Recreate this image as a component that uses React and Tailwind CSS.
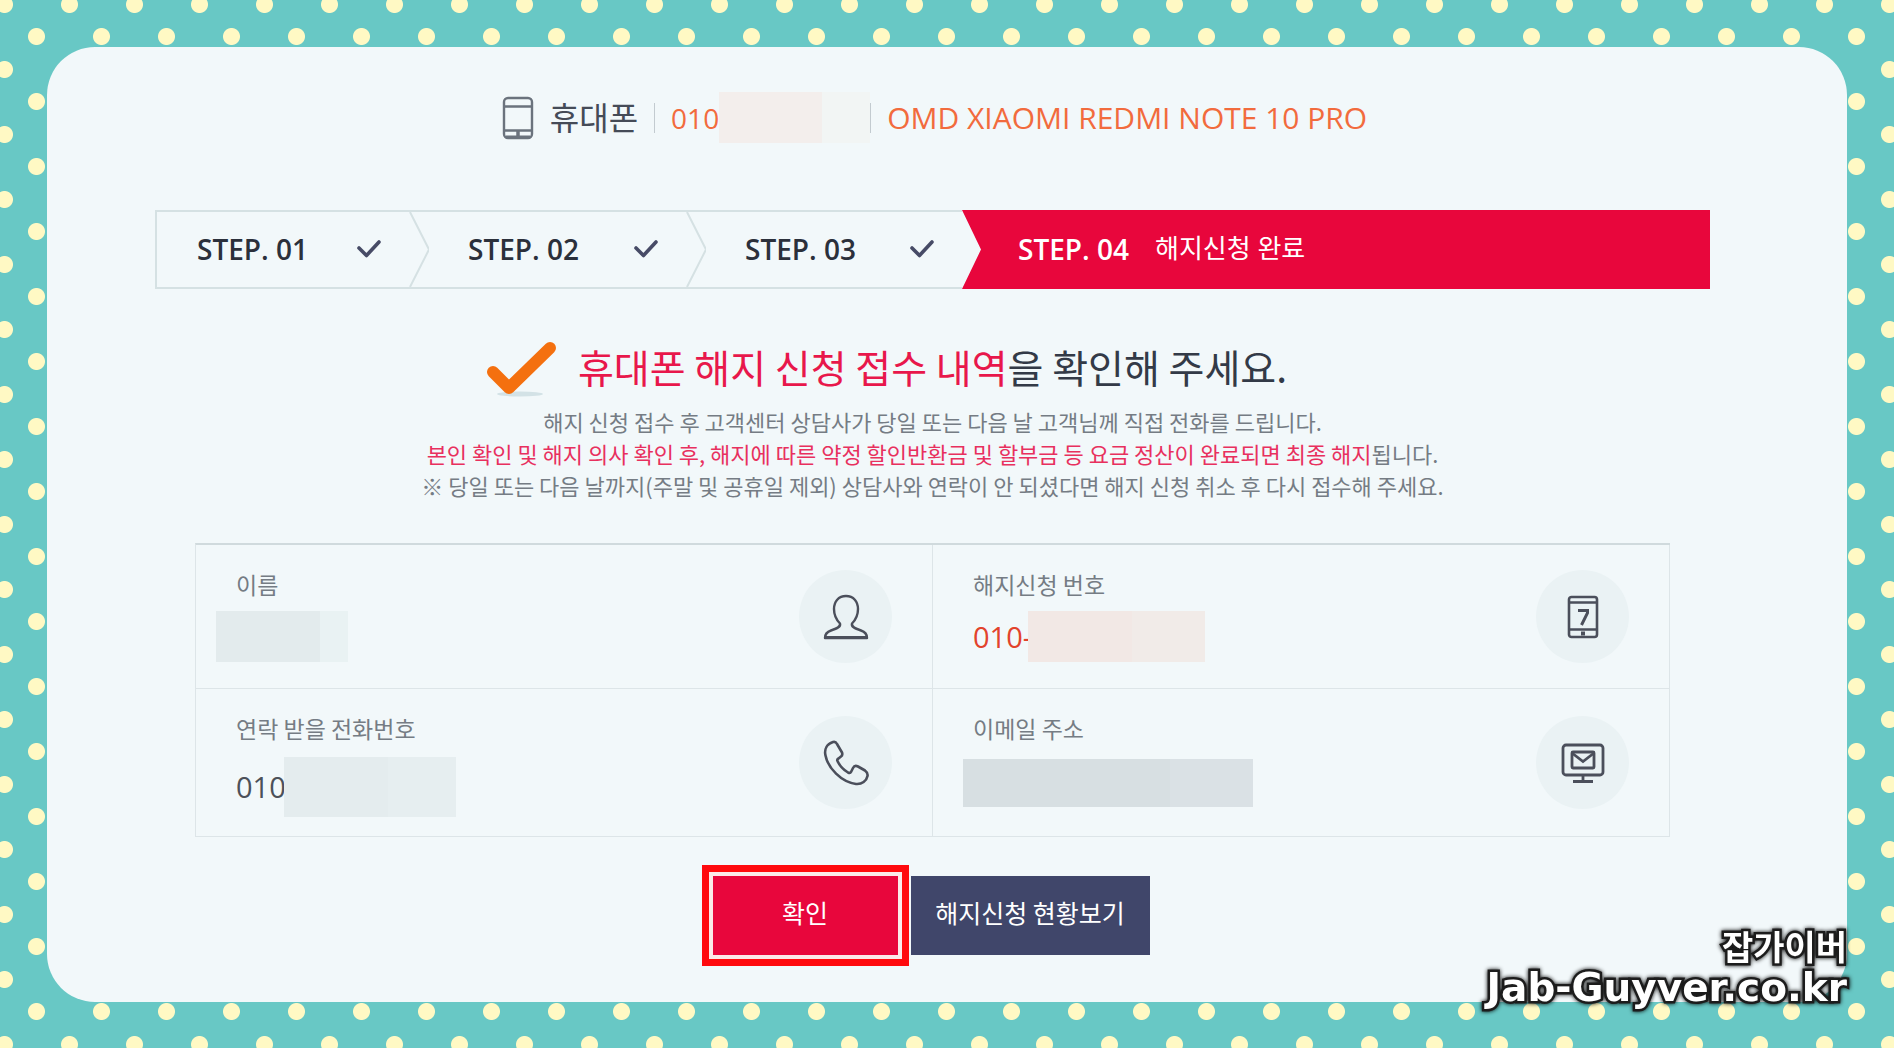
import React from 'react';
import clsx from 'clsx';

const steps = [
  { label: 'STEP. 01', done: true },
  { label: 'STEP. 02', done: true },
  { label: 'STEP. 03', done: true },
];

const PhoneIcon = () => (
  <svg viewBox="0 0 32 44" className="w-8 h-11 shrink-0" fill="none" stroke="#6b737d" strokeWidth="2.4">
    <rect x="2" y="2" width="28" height="40" rx="4" />
    <path d="M2 10.500H30M2 34.500H30" />
    <path d="M16 34.500V42" strokeWidth="3.500" />
    <path d="M4 40.500H28" strokeWidth="2" />
  </svg>
);

const StepCheck = () => (
  <svg viewBox="0 0 26 20" className="w-[26px] h-5" fill="none" stroke="#474b66" strokeWidth="3.6">
    <path d="M3 9L10.500 16.500L23 3" strokeLinecap="round" strokeLinejoin="round" />
  </svg>
);

const Chevron = () => (
  <svg
    viewBox="0 0 20 78"
    preserveAspectRatio="none"
    className="absolute left-full top-0 w-5 h-full"
    fill="none"
    stroke="#d5e1e3"
    strokeWidth="2"
  >
    <path d="M1 0L20 39L1 78" />
  </svg>
);

const BigCheck = () => (
  <svg viewBox="0 0 72 58" className="w-[72px] h-[58px]" fill="none">
    <ellipse cx="34" cy="55" rx="23" ry="2.500" fill="#d3e2e6" />
    <path d="M7 33L23 49L64 9" stroke="#f4700f" strokeWidth="12" strokeLinecap="round" strokeLinejoin="round" />
  </svg>
);

const UserIcon = () => (
  <svg viewBox="0 0 48 48" className="w-12 h-12" fill="none" stroke="#4b4f5b" strokeWidth="2.400" strokeLinejoin="round">
    <path d="M24 3C16.500 3 12 8.500 12 16C12 21.500 13.500 26 18 30.500C19 34 15 35.500 9 37.500C4.500 39 3 41 3 45H45C45 41 43.500 39 39 37.500C33 35.500 29 34 30 30.500C34.500 26 36 21.500 36 16C36 8.500 31.500 3 24 3Z" />
    <path d="M3 44.500H45" strokeWidth="3" />
  </svg>
);

const CallIcon = () => (
  <svg viewBox="0 0 48 48" className="w-12 h-12" fill="none" stroke="#4b4f5b" strokeWidth="2.600" strokeLinejoin="round">
    <path d="M11 3C5 5 2 10 3.500 16.500C6 29 19 43 34 45C40 45.500 44.500 42 45.500 37C46 34.500 45 33 43 31.500L36 27.500C34 26.500 32 27 31 29L29 33C28.500 34 27 34 26 33.500C21 30.500 17.500 26.500 15.500 22C15 21 15.500 20 16.500 19.500L19 17.500C20.500 16.500 20.500 15 20 13.500L15 5C14 3 12.500 2.500 11 3Z" />
  </svg>
);

const NumberIcon = () => (
  <svg viewBox="0 0 32 44" className="w-8 h-11" fill="none" stroke="#4b4f5b" strokeWidth="2.600">
    <rect x="2" y="2" width="28" height="40" rx="2.500" />
    <path d="M2 7.500H30M2 34.500H30" />
    <path d="M14 38.500H18" strokeWidth="4" />
    <path d="M11 15.500H20.500V18L14.500 30" strokeWidth="3" />
  </svg>
);

const MailIcon = () => (
  <svg viewBox="0 0 44 40" className="w-11 h-10" fill="none" stroke="#4b4f5b" strokeWidth="2.800">
    <rect x="2" y="2" width="40" height="30" rx="3" />
    <rect x="11" y="9" width="22" height="16" rx="1" />
    <path d="M11 10L22 18.500L33 10M22 32V38M12 38.500H32" />
  </svg>
);

const fields = [
  {
    label: '이름',
    row: 'h-[144px]',
    gap: 'mt-3',
    mask: 'ml-[-20px] h-[51px]',
    parts: ['w-[104px] bg-[#e3ebed]', 'w-7 bg-[#e9f2f3]'],
    Icon: UserIcon,
  },
  {
    label: '해지신청 번호',
    prefix: '010-',
    tone: 'text-[#e2432c] font-medium leading-[52px]',
    row: 'h-[144px]',
    gap: 'mt-3',
    mask: 'relative ml-[-4px] h-[51px]',
    parts: ['w-[104px] bg-[#f2e8e5]', 'w-[73px] bg-[#f1ebe8]'],
    Icon: NumberIcon,
  },
  {
    label: '연락 받을 전화번호',
    prefix: '010',
    tone: 'text-[#4c5159] leading-[60px]',
    row: 'h-[148px]',
    gap: 'mt-[14px]',
    mask: 'ml-[-2px] h-[60px]',
    parts: ['w-[104px] bg-[#e4ecee]', 'w-[68px] bg-[#e6eef0]'],
    Icon: CallIcon,
  },
  {
    label: '이메일 주소',
    row: 'h-[148px]',
    gap: 'mt-4',
    mask: 'ml-[-10px] h-12',
    parts: ['w-[207px] bg-[#d7dfe2]', 'w-[83px] bg-[#dae1e5]'],
    Icon: MailIcon,
  },
];

const Field = ({ label, prefix, tone, row, gap, mask, parts, Icon }) => (
  <div className={clsx('flex items-center justify-between pl-10 pr-10 border-r border-b border-[#dde5e8]', row)}>
    <dl className="self-start pt-6">
      <dt className="text-[23px] leading-[30px] text-[#757c84]">{label}</dt>
      <dd className={clsx('flex items-start', gap)}>
        {prefix && (
          <span className={clsx('text-[29px] font-["Open_Sans","Noto_Sans_CJK_KR",sans-serif]', tone)}>
            {prefix}
          </span>
        )}
        <span className={clsx('flex', mask)}>
          {parts.map((part) => (
            <span key={part} className={part} />
          ))}
        </span>
      </dd>
    </dl>
    <div className="flex items-center justify-center w-[93px] h-[93px] shrink-0 rounded-full bg-[#eaf2f4]">
      <Icon />
    </div>
  </div>
);

const DeviceHeader = () => (
  <header className="flex items-center justify-center h-[51px] pl-1 font-['Open_Sans','Noto_Sans_CJK_KR',sans-serif]">
    <PhoneIcon />
    <span className="ml-4 text-[32px] text-[#454b57]">휴대폰</span>
    <span className="w-px h-[30px] mx-4 bg-[#c3cbd0]" />
    <span className="text-[28px] text-[#f26b3d]">010</span>
    <span className="flex h-full">
      <span className="w-[103px] bg-[#f3eeec]" />
      <span className="w-12 bg-[#f2f5f4]" />
    </span>
    <span className="w-px h-[30px] mr-4 bg-[#c3cbd0]" />
    <span className="text-[30px] text-[#f26b3d]">OMD XIAOMI REDMI NOTE 10 PRO</span>
  </header>
);

const StepBar = () => (
  <ol className="grid grid-cols-[254fr_277fr_276fr_748fr] h-[79px] mt-[67px] text-[28px] text-[#2b303b] font-semibold font-['Open_Sans','Noto_Sans_CJK_KR',sans-serif]">
    {steps.map((step, i) => (
      <li
        key={step.label}
        className={clsx(
          'relative flex items-center justify-between pb-[2px] pr-[27px] border-y-2 border-[#d5e1e3]',
          i === 0 ? 'pl-10 border-l-2' : 'pl-[59px]'
        )}
      >
        {step.label}
        {step.done && <StepCheck />}
        {i < 2 && <Chevron />}
      </li>
    ))}
    <li className="flex items-center gap-[26px] pb-[2px] pl-14 bg-[#e8063c] text-white [clip-path:polygon(0_0,100%_0,100%_100%,0_100%,19px_50%)]">
      STEP. 04
      <span className="text-[26px] font-normal">해지신청 완료</span>
    </li>
  </ol>
);

export default function App() {
  return (
    <div className="relative flex min-h-screen p-[47px] bg-[#68c8c5] bg-[radial-gradient(circle,#fff9c4_8px,transparent_9px),radial-gradient(circle,#fff9c4_8px,transparent_9px)] bg-[size:65px_65px] bg-[position:-28px_-28px,4px_4px] font-['Noto_Sans_CJK_KR',sans-serif]">
      <main className="flex-1 pt-[45px] pb-9 pl-[108px] pr-[137px] rounded-[48px] bg-[#f2f8fa]">
        <DeviceHeader />
        <StepBar />

        <section className="mt-[50px] text-center">
          <div className="grid grid-cols-[1fr_auto_1fr] gap-5 items-center">
            <div className="flex justify-end">
              <BigCheck />
            </div>
            <h1 className="pb-1 text-[39px] leading-[54px] text-[#333a47]">
              <span className="text-[#e8174b]">휴대폰 해지 신청 접수 내역</span>을 확인해 주세요.
            </h1>
          </div>
          <div className="mt-2 text-[22px] leading-8 text-[#757c84]">
            <p>해지 신청 접수 후 고객센터 상담사가 당일 또는 다음 날 고객님께 직접 전화를 드립니다.</p>
            <p>
              <span className="text-[#e8305e]">
                본인 확인 및 해지 의사 확인 후, 해지에 따른 약정 할인반환금 및 할부금 등 요금 정산이 완료되면 최종 해지
              </span>
              됩니다.
            </p>
            <p>※ 당일 또는 다음 날까지(주말 및 공휴일 제외) 상담사와 연락이 안 되셨다면 해지 신청 취소 후 다시 접수해 주세요.</p>
          </div>
        </section>

        <section className="grid grid-cols-2 mx-10 mt-[42px] border-t-2 border-l border-t-[#d0dadd] border-l-[#dde5e8]">
          {fields.map((field) => (
            <Field key={field.label} {...field} />
          ))}
        </section>

        <div className="flex items-center justify-center gap-[2px] mt-7 pr-[14px] text-[25px] leading-8 text-white">
          <div className="p-1 border-[7px] border-[#ff0a0e] bg-[#fbe9ea]">
            <button type="button" className="block w-[185px] h-[79px] pb-2 bg-[#e8063c]">
              확인
            </button>
          </div>
          <button type="button" className="w-[239px] h-[79px] pb-2 bg-[#40466a]">
            해지신청 현황보기
          </button>
        </div>
      </main>

      <div className="absolute right-[47px] bottom-[43px] text-right font-bold text-white [-webkit-text-stroke:5px_#1c1c1c] [paint-order:stroke_fill] drop-shadow-[0_0_2px_#000]">
        <p className="pb-[6px] text-[34px] leading-9">잡가이버</p>
        <p className="text-[39px] leading-9 font-['DejaVu_Sans',sans-serif]">Jab-Guyver.co.kr</p>
      </div>
    </div>
  );
}
